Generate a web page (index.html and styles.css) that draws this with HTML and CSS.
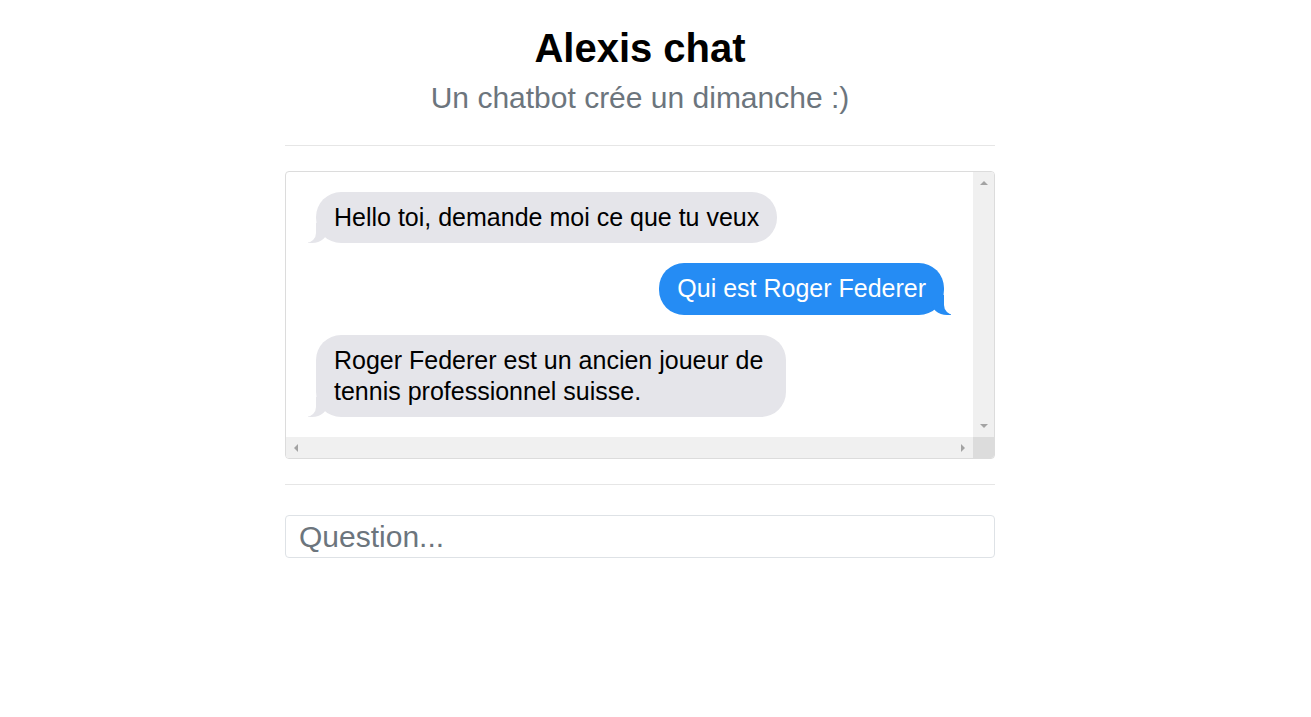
FILE: index.html
```html
<!DOCTYPE html>
<html lang="fr">
<head>
<meta charset="utf-8">
<title>Alexis chat</title>
<link rel="stylesheet" href="styles.css">
</head>
<body>
<div class="page">
  <main class="container">
    <header class="header">
      <h1 class="title">Alexis chat</h1>
      <p class="subtitle">Un chatbot crée un dimanche :)</p>
    </header>
    <hr class="sep sep-top">
    <section class="chatbox">
      <div class="messages">
        <div class="bubble them">Hello toi, demande moi ce que tu veux</div>
        <div class="bubble me">Qui est Roger Federer</div>
        <div class="bubble them">Roger Federer est un ancien joueur de tennis professionnel suisse.</div>
      </div>
      <div class="vscroll">
        <span class="arrow up"></span>
        <span class="arrow down"></span>
      </div>
      <div class="hscroll">
        <span class="arrow left"></span>
        <span class="arrow right"></span>
      </div>
      <div class="corner"></div>
    </section>
    <hr class="sep sep-bottom">
    <input class="question" type="text" placeholder="Question...">
  </main>
</div>
</body>
</html>
```
FILE: styles.css
```css
* { box-sizing: border-box; }

html, body {
  margin: 0;
  padding: 0;
  background: #fff;
}

body {
  font-family: "Liberation Sans", Arial, sans-serif;
  color: #212529;
}

.page {
  max-width: 1280px;
}

.container {
  width: 710px;
  margin: 0 auto;
  padding-top: 24px;
}

.header {
  text-align: center;
}

.title {
  margin: 0 0 8px;
  font-size: 40px;
  line-height: 48px;
  font-weight: 700;
  color: #000;
}

.subtitle {
  margin: 0;
  font-size: 30px;
  line-height: 36px;
  color: #6c757d;
}

.sep {
  border: 0;
  border-top: 1px solid #e6e6e6;
  height: 0;
}

.sep-top {
  margin: 29px 0 25px;
}

.sep-bottom {
  margin: 25px 0 30px;
}

.chatbox {
  display: grid;
  grid-template-columns: 1fr 21px;
  grid-template-rows: 265px 21px;
  border: 1px solid #dcdcdc;
  border-radius: 4px;
  overflow: hidden;
}

.messages {
  display: flex;
  flex-direction: column;
  align-items: flex-start;
  gap: 20px;
  padding: 20px 30px 20px 30px;
  overflow: hidden;
}

.bubble {
  position: relative;
  max-width: 470px;
  padding: 10px 18px;
  border-radius: 25px;
  font-size: 25px;
  line-height: 31.25px;
}

.bubble::before,
.bubble::after {
  content: "";
  position: absolute;
  bottom: 0;
  height: 20px;
}

.them {
  background: #e5e5ea;
  color: #000;
}

.them::before {
  left: -8px;
  width: 20px;
  background: #e5e5ea;
  border-bottom-right-radius: 16px 14px;
}

.them::after {
  left: -26px;
  width: 26px;
  background: #fff;
  border-bottom-right-radius: 10px;
}

.me {
  align-self: flex-end;
  margin-right: -1px;
  background: #258cf4;
  color: #fff;
}

.me::before {
  right: -7px;
  width: 20px;
  background: #258cf4;
  border-bottom-left-radius: 16px 14px;
}

.me::after {
  right: -26px;
  width: 26px;
  background: #fff;
  border-bottom-left-radius: 10px;
}

.vscroll {
  background: #f0f0f0;
  display: flex;
  flex-direction: column;
  justify-content: space-between;
  align-items: center;
  padding: 9px 0 9px;
}

.hscroll {
  background: #f0f0f0;
  display: flex;
  justify-content: space-between;
  align-items: center;
  padding: 0 8px 0 8px;
}

.corner {
  background: #dcdcdc;
}

.arrow {
  display: block;
  width: 0;
  height: 0;
  border-style: solid;
  border-color: transparent;
}

.arrow.up {
  border-width: 0 4.5px 4.5px 4.5px;
  border-bottom-color: #a3a3a3;
}

.arrow.down {
  border-width: 4.5px 4.5px 0 4.5px;
  border-top-color: #a3a3a3;
}

.arrow.left {
  border-width: 4.5px 4.5px 4.5px 0;
  border-right-color: #a3a3a3;
}

.arrow.right {
  border-width: 4.5px 0 4.5px 4.5px;
  border-left-color: #a3a3a3;
}

.question {
  display: block;
  width: 100%;
  height: 43px;
  margin: 0;
  padding: 0 13px;
  border: 1px solid #dee2e6;
  border-radius: 4px;
  font-family: "Liberation Sans", Arial, sans-serif;
  font-size: 30px;
  color: #212529;
  background: #fff;
  outline: none;
}

.question::placeholder {
  color: #6c757d;
}
```
